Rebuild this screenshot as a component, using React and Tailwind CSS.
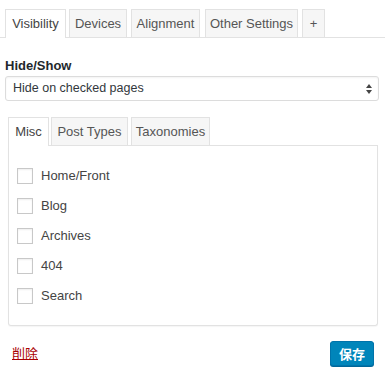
import React from "react";

const topTabs = [
  { label: "Visibility", w: "w-[61px]", active: true, ml: "ml-[5px]" },
  { label: "Devices", w: "w-[58px]", ml: "ml-[3px]" },
  { label: "Alignment", w: "w-[69px]", ml: "ml-[4px]" },
  { label: "Other Settings", w: "w-[93px]", ml: "ml-[5px]" },
  { label: "+", w: "w-[23px]", ml: "ml-[4px]" },
];

const innerTabs = [
  { label: "Misc", w: "w-[41px]", active: true, ml: "ml-0" },
  { label: "Post Types", w: "w-[77px]", ml: "ml-[2px]" },
  { label: "Taxonomies", w: "w-[79px]", ml: "ml-[3px]" },
];

const items = ["Home/Front", "Blog", "Archives", "404", "Search"];

function Tab({ t }) {
  return (
    <div
      className={`${t.w} ${t.ml} h-[28px] flex items-center justify-center border border-b-0 border-[#e2e2e2] text-[13px] leading-none ${
        t.active ? "bg-white text-[#444] -mb-px h-[29px] pb-px" : "bg-[#f6f6f6] text-[#555]"
      }`}
    >
      {t.label}
    </div>
  );
}

export default function App() {
  return (
    <div className="w-[385px] h-[376px] bg-white font-['Liberation_Sans',Arial,sans-serif] text-[#444] overflow-hidden">
      <div className="pt-[9px] flex items-end border-b border-[#e2e2e2]">
        {topTabs.map((t) => (
          <Tab key={t.label} t={t} />
        ))}
      </div>

      <div className="px-[5px]">
        <div className="mt-[19px] text-[13px] leading-[18px] font-semibold text-[#23282d]">Hide/Show</div>
        <div className="mt-[1px] h-[25px] w-[374px] flex items-center justify-between border border-[#dcdcdc] rounded-[3px] shadow-[inset_0_1px_2px_rgba(0,0,0,0.05)] pl-[7px] pr-[6px] text-[12.5px] text-[#32373c]">
          <span>Hide on checked pages</span>
          <svg width="6" height="10" viewBox="0 0 6 10">
            <path d="M3 0 L6 4 L0 4 Z" fill="#444" />
            <path d="M0 6 L6 6 L3 10 Z" fill="#444" />
          </svg>
        </div>

        <div className="mt-[16px] ml-[3px] mr-[2px]">
          <div className="flex items-end border-b border-[#e2e2e2]">
            {innerTabs.map((t) => (
              <Tab key={t.label} t={t} />
            ))}
          </div>
          <div className="border border-t-0 border-[#e2e2e2] rounded-b-[3px] pt-[15px] pb-[14px] pl-[8px] shadow-[0_1px_1px_rgba(0,0,0,0.04)]">
            {items.map((it) => (
              <div key={it} className="h-[30px] flex items-center">
                <span className="w-[16px] h-[16px] border border-[#c8c8c8] bg-white shadow-[inset_0_1px_2px_rgba(0,0,0,0.07)]" />
                <span className="ml-[8px] text-[13px] text-[#444]">{it}</span>
              </div>
            ))}
          </div>
        </div>

        <div className="mt-[15px] flex items-center justify-between">
          <a className="ml-[7px] text-[13px] text-[#a00] underline font-['Liberation_Sans','Noto_Sans_CJK_JP',sans-serif]">
            削除
          </a>
          <button className="mr-[6px] h-[25px] w-[44px] flex items-center justify-center rounded-[3px] bg-[#0085ba] border border-[#0073aa] shadow-[0_1px_0_#006799] text-white text-[13px] font-bold font-['Noto_Sans_CJK_JP',sans-serif]">
            保存
          </button>
        </div>
      </div>
    </div>
  );
}
